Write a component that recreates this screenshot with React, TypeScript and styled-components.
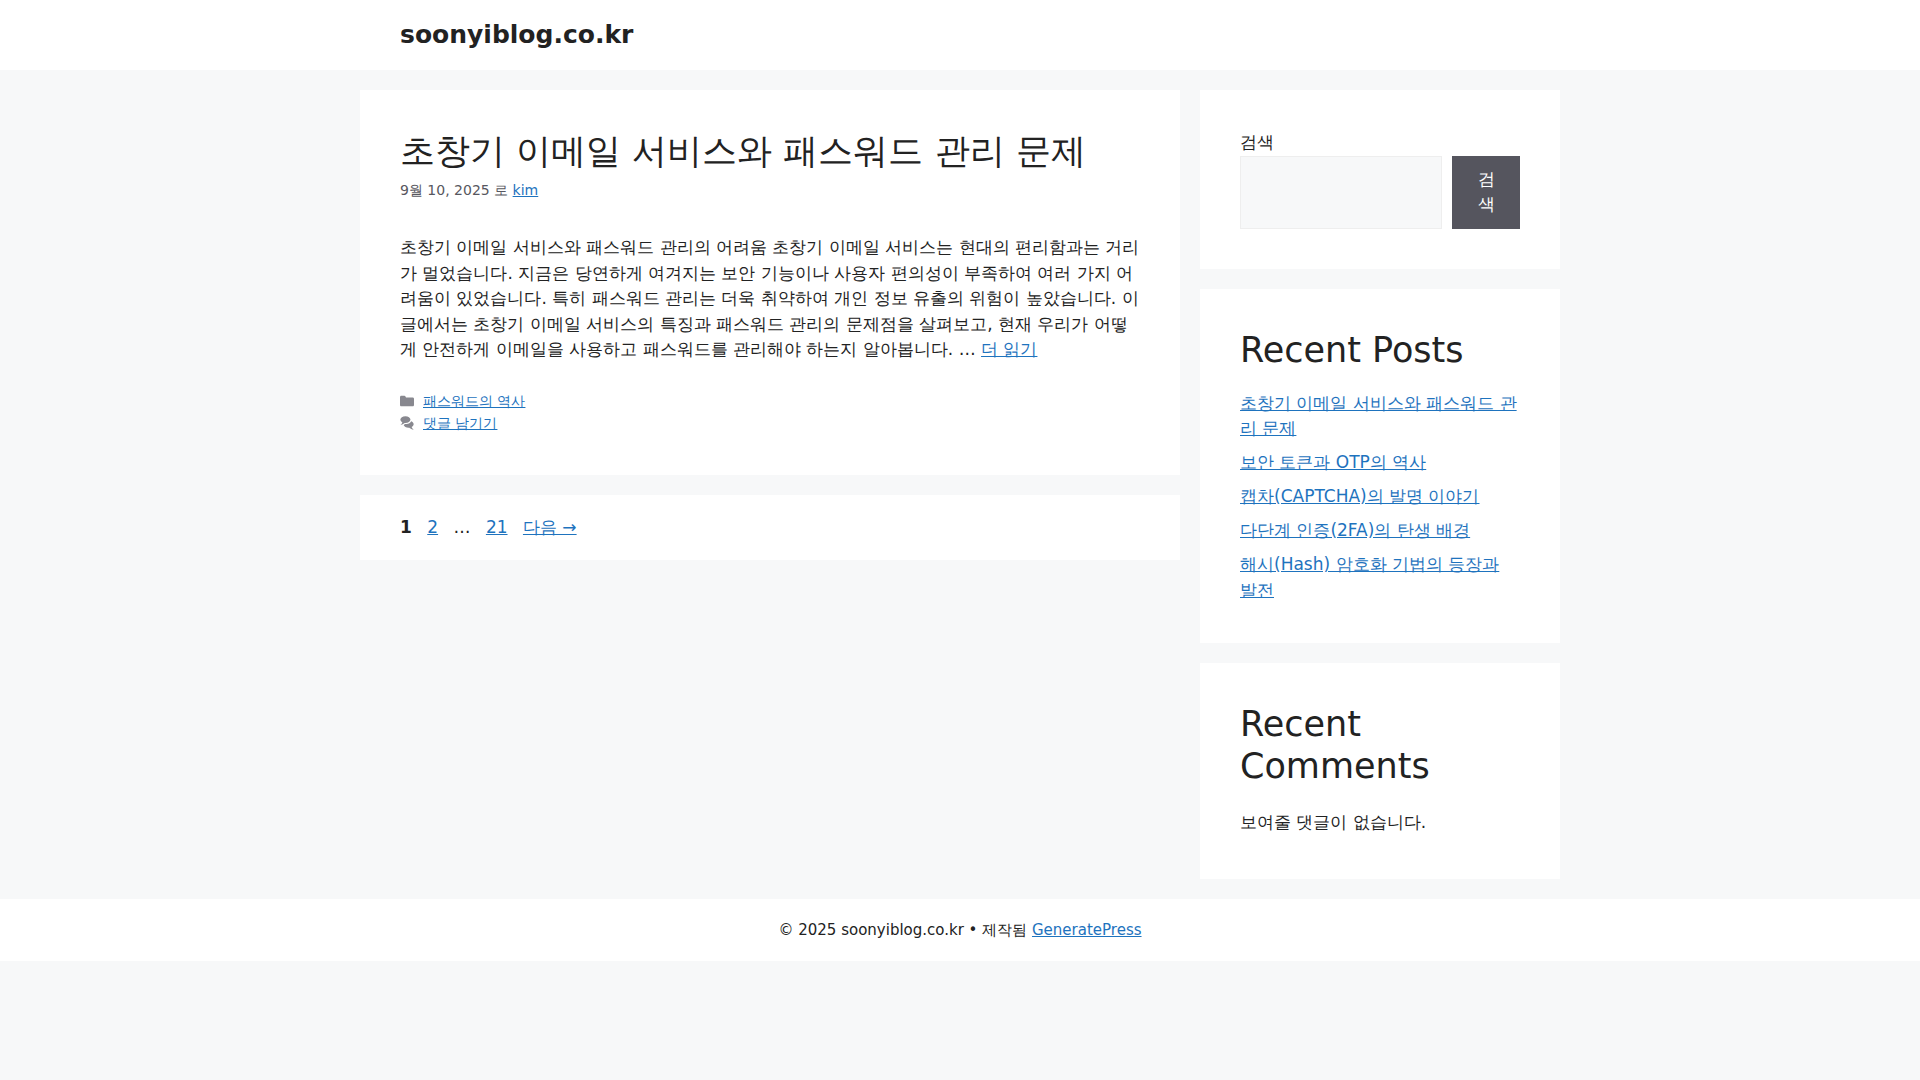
import React from "react";
import styled, { createGlobalStyle } from "styled-components";

const Global = createGlobalStyle`
  *, *::before, *::after { box-sizing: border-box; }
  body {
    margin: 0;
    background: #f7f8f9;
    color: #222222;
    font-family: "DejaVu Sans", sans-serif;
    font-size: 17px;
    line-height: 1.5;
  }
`;

const Link = styled.a`
  color: #1e73be;
  text-decoration: underline;
`;
const Header = styled.header`
  background: #ffffff;
`;
const HeaderInner = styled.div`
  max-width: 1200px;
  margin: 0 auto;
  padding: 20px 40px;
`;
const SiteTitle = styled.p`
  margin: 0;
  font-size: 25px;
  font-weight: 700;
  line-height: 30px;
`;
const HomeLink = styled.a`
  color: #222222;
  text-decoration: none;
`;
const Page = styled.div`
  display: flex;
  align-items: flex-start;
  gap: 20px;
  max-width: 1200px;
  margin: 20px auto;
`;
const Main = styled.main`
  flex: 1 1 0;
  min-width: 0;
  display: flex;
  flex-direction: column;
  gap: 20px;
`;
const Sidebar = styled.aside`
  flex: 0 0 30%;
  min-width: 0;
  display: flex;
  flex-direction: column;
  gap: 20px;
`;
const Card = styled.section`
  background: #ffffff;
  padding: 40px;
`;
const Heading = styled.h2`
  margin: 0 0 20px;
  font-size: 35px;
  font-weight: 400;
  line-height: 42px;
`;
const PostTitle = styled(Heading)`
  margin: 0;
`;
const PostMeta = styled.div`
  margin-top: 7px;
  color: #575760;
  font-size: 14px;
  line-height: 22px;
`;
const Summary = styled.p`
  margin: 34px 0 0;
`;
const PostFooter = styled.footer`
  margin-top: 27px;
  padding-bottom: 1px;
  color: #575760;
  font-size: 14px;
  line-height: 22px;
`;
const FooterItem = styled.div`
  display: flex;
  align-items: center;
  gap: 9px;
`;
const Icon = styled.svg`
  width: 14px;
  height: 14px;
  fill: currentColor;
  opacity: 0.7;
`;
const Pagination = styled.nav`
  background: #ffffff;
  padding: 20px 40px;

  > * {
    margin-right: 10px;
  }
`;
const Current = styled.span`
  font-weight: 700;
`;
const SearchLabel = styled.label`
  display: block;
`;
const SearchRow = styled.div`
  display: flex;
  gap: 10px;
`;
const SearchInput = styled.input`
  flex: 1 1 0;
  min-width: 0;
  border: 1px solid #eeeeee;
  background: #f7f8f9;
  padding: 10px 15px;
  font: inherit;
`;
const SearchButton = styled.button`
  width: 68px;
  border: 0;
  background: #55555e;
  color: #ffffff;
  padding: 11px 24px;
  font: inherit;
`;
const PostList = styled.ul`
  list-style: none;
  margin: 0;
  padding: 0;
  display: flex;
  flex-direction: column;
  gap: 0.5em;
`;
const Note = styled.p`
  margin: 0;
  padding: 3px 0;
`;
const SiteFooter = styled.footer`
  background: #ffffff;
  padding: 20px 40px;
  text-align: center;
  font-size: 15px;
`;

const recentPosts = [
  "초창기 이메일 서비스와 패스워드 관리 문제",
  "보안 토큰과 OTP의 역사",
  "캡차(CAPTCHA)의 발명 이야기",
  "다단계 인증(2FA)의 탄생 배경",
  "해시(Hash) 암호화 기법의 등장과 발전",
];

export default function App() {
  return (
    <>
      <Global />
      <Header>
        <HeaderInner>
          <SiteTitle>
            <HomeLink href="#">soonyiblog.co.kr</HomeLink>
          </SiteTitle>
        </HeaderInner>
      </Header>
      <Page>
        <Main>
          <Card as="article">
            <PostTitle>
              <HomeLink href="#">초창기 이메일 서비스와 패스워드 관리 문제</HomeLink>
            </PostTitle>
            <PostMeta>
              9월 10, 2025 로 <Link href="#">kim</Link>
            </PostMeta>
            <Summary>
              초창기 이메일 서비스와 패스워드 관리의 어려움 초창기 이메일 서비스는 현대의 편리함과는 거리가 멀었습니다. 지금은
              당연하게 여겨지는 보안 기능이나 사용자 편의성이 부족하여 여러 가지 어려움이 있었습니다. 특히 패스워드 관리는 더욱
              취약하여 개인 정보 유출의 위험이 높았습니다. 이 글에서는 초창기 이메일 서비스의 특징과 패스워드 관리의 문제점을
              살펴보고, 현재 우리가 어떻게 안전하게 이메일을 사용하고 패스워드를 관리해야 하는지 알아봅니다. …{" "}
              <Link href="#">더 읽기</Link>
            </Summary>
            <PostFooter>
              <FooterItem>
                <Icon viewBox="0 0 512 512" aria-hidden="true">
                  <path d="M0 112c0-26.510 21.490-48 48-48h110.014a48 48 0 0 1 43.592 27.907l12.349 26.791A16 16 0 0 0 228.486 128H464c26.510 0 48 21.490 48 48v224c0 26.510-21.490 48-48 48H48c-26.510 0-48-21.490-48-48V112z" />
                </Icon>
                <Link href="#">패스워드의 역사</Link>
              </FooterItem>
              <FooterItem>
                <Icon viewBox="0 0 512 512" aria-hidden="true">
                  <path d="M132.838 329.973a435.298 435.298 0 0 0 16.769-9.004c13.363-7.574 26.587-16.142 37.419-25.507 7.544.597 15.270.925 23.098.925 54.905 0 105.634-15.311 143.285-41.280 23.728-16.365 43.115-37.692 54.155-62.645 54.739 22.205 91.498 63.272 91.498 110.286 0 42.186-29.558 79.498-75.090 102.828 23.460 49.216 75.090 101.709 75.090 101.709s-115.837-38.350-154.424-78.460c-9.956 1.120-20.297 1.758-30.793 1.758-88.727 0-162.927-43.071-181.007-100.610z" />
                  <path d="M383.371 132.502c0 70.603-82.961 127.787-185.216 127.787-10.496 0-20.837-.639-30.793-1.757-38.587 40.093-154.424 78.429-154.424 78.429s51.630-52.472 75.090-101.670c-45.532-23.321-75.090-60.619-75.090-102.790C12.938 61.900 95.900 4.716 198.155 4.716 300.410 4.715 383.370 61.900 383.370 132.502z" />
                </Icon>
                <Link href="#">댓글 남기기</Link>
              </FooterItem>
            </PostFooter>
          </Card>
          <Pagination aria-label="페이지">
            <Current>1</Current> <Link href="#">2</Link> <span>…</span> <Link href="#">21</Link>{" "}
            <Link href="#">다음 →</Link>
          </Pagination>
        </Main>
        <Sidebar>
          <Card>
            <SearchLabel htmlFor="search">검색</SearchLabel>
            <SearchRow>
              <SearchInput id="search" type="search" />
              <SearchButton type="submit">검색</SearchButton>
            </SearchRow>
          </Card>
          <Card>
            <Heading>Recent Posts</Heading>
            <PostList>
              {recentPosts.map((title) => (
                <li key={title}>
                  <Link href="#">{title}</Link>
                </li>
              ))}
            </PostList>
          </Card>
          <Card>
            <Heading>Recent Comments</Heading>
            <Note>보여줄 댓글이 없습니다.</Note>
          </Card>
        </Sidebar>
      </Page>
      <SiteFooter>
        © 2025 soonyiblog.co.kr • 제작됨 <Link href="#">GeneratePress</Link>
      </SiteFooter>
    </>
  );
}
